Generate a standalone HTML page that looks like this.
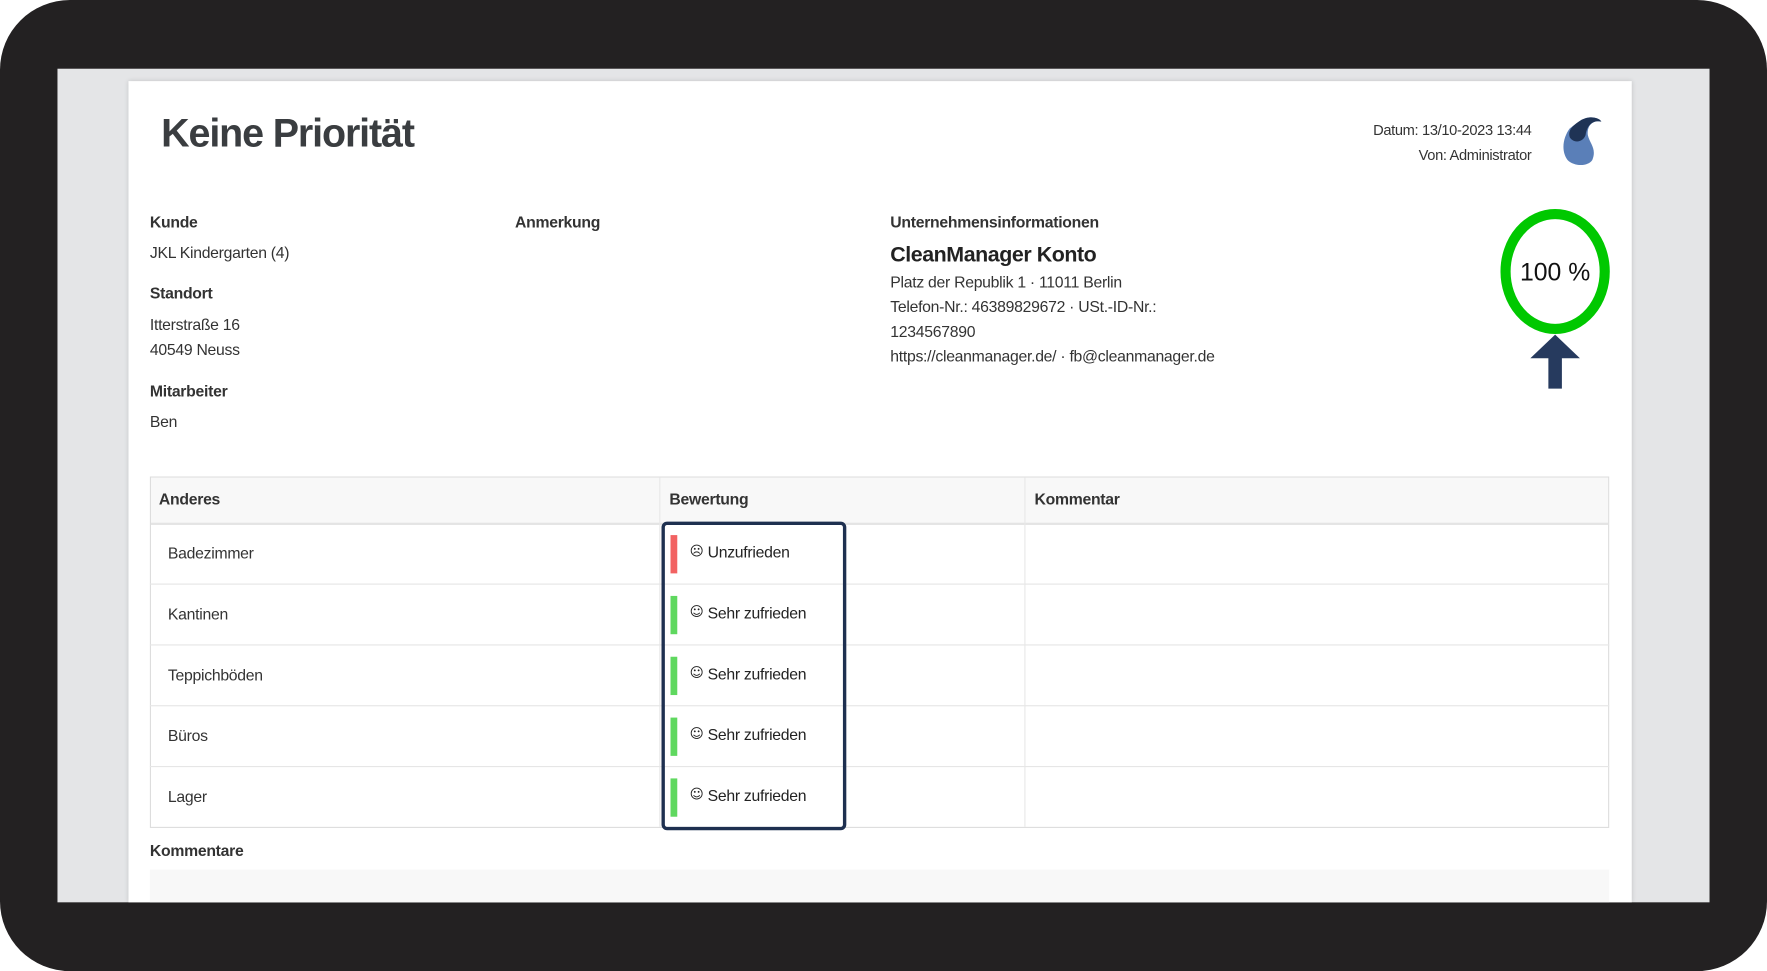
<!DOCTYPE html>
<html><head><meta charset="utf-8"><style>
html,body{margin:0;padding:0;width:1767px;height:971px;overflow:hidden;background:#fff}
#w{position:absolute;left:0;top:0;width:1568px;height:862px;transform:scale(1.12691,1.1265);transform-origin:0 0;font-family:"Liberation Sans",Arial,sans-serif;color:#333}
.a{position:absolute;white-space:nowrap}
.b{font-weight:bold}
.f14{font-size:14px;letter-spacing:-0.25px}
.row{position:absolute;left:133px;width:1295px;height:54px;border-top:1px solid #e6e6e6}
</style></head><body><div id="w">
<div class="a" style="left:0;top:0;width:1568px;height:862px;background:#232122;border-radius:62px"></div>
<div class="a" style="left:51px;top:61px;width:1466px;height:740px;background:#e4e5e7"></div>
<div class="a" style="left:114px;top:72px;width:1334px;height:729px;background:#fff;box-shadow:0 0 4px rgba(0,0,0,.15)"></div>
<div class="a b" style="left:143px;top:99px;font-size:35px;color:#3a3d40;letter-spacing:-1px">Keine Priorität</div>
<div class="a" style="right:209px;top:105px;font-size:13px;text-align:right;line-height:22px;color:#333;letter-spacing:-0.3px">Datum: 13/10-2023 13:44<br>Von: Administrator</div>
<svg class="a" style="left:1383px;top:100px" width="46" height="52" viewBox="0 0 46 52">
<path d="M18 8 C26 2 36 4 38 8 C30 6 25 12 26 20 C28 28 34 32 30 42 C26 48 14 48 8 42 C2 34 4 22 10 14 Z" fill="#5a7fb8"/>
<path d="M18 8 C26 2 36 4 38 8 C30 6 25 12 24 20 C22 26 14 28 10 22 C8 16 12 12 18 8Z" fill="#1f3355"/>
</svg>
<svg class="a" style="left:1330px;top:185px" width="100" height="112" viewBox="0 0 100 112">
<ellipse cx="50" cy="56" rx="44" ry="51" fill="none" stroke="#00c800" stroke-width="9"/>
<text x="50" y="64" text-anchor="middle" font-family="Liberation Sans" font-size="22" fill="#111">100 %</text>
</svg>
<svg class="a" style="left:1357px;top:296px" width="46" height="50" viewBox="0 0 46 50">
<path d="M23 1 L45 22 L29 22 L29 49 L17 49 L17 22 L1 22 Z" fill="#263a5e"/>
</svg>
<div class="a b f14" style="left:133px;top:189px">Kunde</div>
<div class="a f14" style="left:133px;top:216px">JKL Kindergarten (4)</div>
<div class="a b f14" style="left:133px;top:252px">Standort</div>
<div class="a f14" style="left:133px;top:277px;line-height:22px">Itterstraße 16<br>40549 Neuss</div>
<div class="a b f14" style="left:133px;top:339px">Mitarbeiter</div>
<div class="a f14" style="left:133px;top:366px">Ben</div>
<div class="a b f14" style="left:457px;top:189px">Anmerkung</div>
<div class="a b f14" style="left:790px;top:189px">Unternehmensinformationen</div>
<div class="a b" style="left:790px;top:216px;font-size:19px;color:#222;letter-spacing:-0.4px">CleanManager Konto</div>
<div class="a f14" style="left:790px;top:239px;line-height:22px">Platz der Republik 1 · 11011 Berlin<br>Telefon-Nr.: 46389829672 · USt.-ID-Nr.:<br>1234567890<br>https://cleanmanager.de/ · fb@cleanmanager.de</div>
<div class="a" style="left:133px;top:423px;width:1293px;height:310px;border:1px solid #ddd"></div>
<div class="a" style="left:134px;top:424px;width:1293px;height:40px;background:#f8f8f8;border-bottom:2px solid #e4e4e4"></div>
<div class="a" style="left:585px;top:424px;width:1px;height:310px;background:#e8e8e8"></div>
<div class="a" style="left:909px;top:424px;width:1px;height:310px;background:#e8e8e8"></div>
<div class="a b f14" style="left:141px;top:435px">Anderes</div>
<div class="a b f14" style="left:594px;top:435px">Bewertung</div>
<div class="a b f14" style="left:918px;top:435px">Kommentar</div>
<div class="row" style="top:518px"></div><div class="row" style="top:572px"></div><div class="row" style="top:626px"></div><div class="row" style="top:680px"></div>
<div class="a f14" style="left:149px;top:483px">Badezimmer</div>
<div class="a f14" style="left:149px;top:537px">Kantinen</div>
<div class="a f14" style="left:149px;top:591px">Teppichböden</div>
<div class="a f14" style="left:149px;top:645px">Büros</div>
<div class="a f14" style="left:149px;top:699px">Lager</div>
<div class="a" style="left:595px;top:475px;width:6px;height:34px;background:#f26262"></div>
<div class="a" style="left:595px;top:529px;width:6px;height:34px;background:#5fd85f"></div>
<div class="a" style="left:595px;top:583px;width:6px;height:34px;background:#5fd85f"></div>
<div class="a" style="left:595px;top:637px;width:6px;height:34px;background:#5fd85f"></div>
<div class="a" style="left:595px;top:691px;width:6px;height:34px;background:#5fd85f"></div>
<div class="a f14" style="left:612px;top:482px;color:#222"><span style="font-family:'DejaVu Sans';font-size:12px;vertical-align:2px">☹</span> Unzufrieden</div>
<div class="a f14" style="left:612px;top:536px;color:#222"><span style="font-family:'DejaVu Sans';font-size:12px;vertical-align:2px">☺</span> Sehr zufrieden</div>
<div class="a f14" style="left:612px;top:590px;color:#222"><span style="font-family:'DejaVu Sans';font-size:12px;vertical-align:2px">☺</span> Sehr zufrieden</div>
<div class="a f14" style="left:612px;top:644px;color:#222"><span style="font-family:'DejaVu Sans';font-size:12px;vertical-align:2px">☺</span> Sehr zufrieden</div>
<div class="a f14" style="left:612px;top:698px;color:#222"><span style="font-family:'DejaVu Sans';font-size:12px;vertical-align:2px">☺</span> Sehr zufrieden</div>
<div class="a" style="left:587px;top:463px;width:158px;height:268px;border:3px solid #1e3050;border-radius:5px"></div>
<div class="a b f14" style="left:133px;top:747px">Kommentare</div>
<div class="a" style="left:133px;top:772px;width:1295px;height:29px;background:#f8f8f8"></div>
</div></body></html>
